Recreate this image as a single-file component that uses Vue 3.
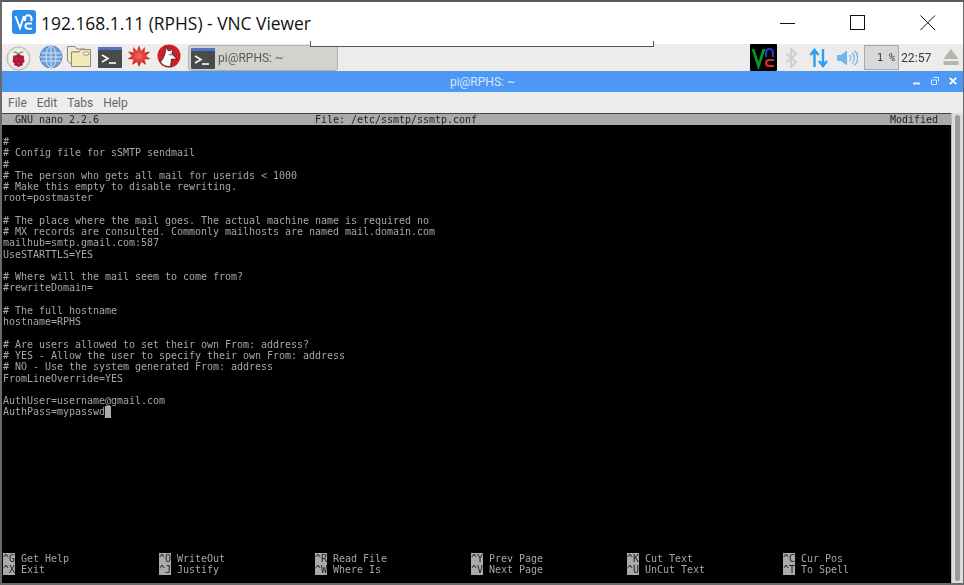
<script setup>
const lines = [
  '',
  '#',
  '# Config file for sSMTP sendmail',
  '#',
  '# The person who gets all mail for userids < 1000',
  '# Make this empty to disable rewriting.',
  'root=postmaster',
  '',
  '# The place where the mail goes. The actual machine name is required no',
  '# MX records are consulted. Commonly mailhosts are named mail.domain.com',
  'mailhub=smtp.gmail.com:587',
  'UseSTARTTLS=YES',
  '',
  '# Where will the mail seem to come from?',
  '#rewriteDomain=',
  '',
  '# The full hostname',
  'hostname=RPHS',
  '',
  '# Are users allowed to set their own From: address?',
  '# YES - Allow the user to specify their own From: address',
  '# NO - Use the system generated From: address',
  'FromLineOverride=YES',
  '',
  'AuthUser=username@gmail.com',
]
const help = [
  ['^G', 'Get Help'], ['^O', 'WriteOut'], ['^R', 'Read File'], ['^Y', 'Prev Page'], ['^K', 'Cut Text'], ['^C', 'Cur Pos'],
  ['^X', 'Exit'], ['^J', 'Justify'], ['^W', 'Where Is'], ['^V', 'Next Page'], ['^U', 'UnCut Text'], ['^T', 'To Spell'],
]
const menus = ['File', 'Edit', 'Tabs', 'Help']
</script>

<template>
  <div class="win">
    <header class="titlebar">
      <svg class="appicon" viewBox="0 0 24 24" width="24" height="24">
        <rect width="24" height="24" rx="3" fill="#2b8de8" />
        <path d="M3.5 6 L8 18 L12 6" fill="none" stroke="#fff" stroke-width="2" />
        <path d="M13 11 V8.5 a3 3 0 0 1 6.5 0 V11" fill="none" stroke="#fff" stroke-width="2" />
        <path d="M20 13.5 H16 a2.6 2.6 0 0 0 0 5.2 H20" fill="none" stroke="#fff" stroke-width="2" />
      </svg>
      <span class="title">192.168.1.11 (RPHS) - VNC Viewer</span>
      <div class="winbtns">
        <svg width="16" height="16" viewBox="0 0 16 16"><path d="M0 8.5H15" stroke="#111" /></svg>
        <svg width="16" height="16" viewBox="0 0 16 16"><rect x="0.5" y="0.5" width="14" height="14" fill="none" stroke="#111" /></svg>
        <svg width="16" height="16" viewBox="0 0 16 16"><path d="M0.5 0.5L15 15M15 0.5L0.5 15" stroke="#111" /></svg>
      </div>
    </header>

    <div class="panel">
      <div class="launchers">
        <svg width="25" height="25" viewBox="0 0 26 26" class="ic-rpi">
          <circle cx="13" cy="13" r="12" fill="#e6e4e0" stroke="#b5b3af" />
          <circle cx="13" cy="13" r="9.5" fill="#f3f2f0" />
          <path d="M13 9C10 6 8 6.5 8 6.5S10 5 13 8C16 5 18 6.5 18 6.5S16 6 13 9Z" fill="#5da83a" stroke="#5da83a" />
          <g fill="#b3153f">
            <circle cx="13" cy="11" r="2.6" /><circle cx="9.4" cy="12" r="2.3" /><circle cx="16.6" cy="12" r="2.3" />
            <circle cx="8.9" cy="15.5" r="2.2" /><circle cx="17.1" cy="15.5" r="2.2" /><circle cx="13" cy="15" r="2.6" />
            <circle cx="10.6" cy="18.6" r="2.2" /><circle cx="15.4" cy="18.6" r="2.2" /><circle cx="13" cy="20" r="1.8" />
          </g>
        </svg>
        <svg width="24" height="24" viewBox="0 0 24 24" class="ic-globe">
          <circle cx="12" cy="12" r="11" fill="#6f9fd8" stroke="#5a7fae" />
          <g fill="none" stroke="#d4e4f5" stroke-width="1">
            <ellipse cx="12" cy="12" rx="5" ry="11" /><path d="M12 1V23M1.5 8H22.5M1 12H23M1.5 16H22.5" />
          </g>
        </svg>
        <svg width="26" height="24" viewBox="0 0 26 24" class="ic-folder">
          <path d="M1.5 2.5H9L11 5H19V8H5.5V20L1.5 17Z" fill="#f2ecd0" stroke="#8c877a" />
          <path d="M5.5 8H13L15 5.5H24.5V22.5H5.5Z" fill="#f5e9b8" stroke="#8c877a" />
          <rect x="17" y="8" width="6" height="3" rx="1.5" fill="#fff" stroke="#8c877a" />
        </svg>
        <svg width="24" height="21" viewBox="0 0 24 21" class="ic-term">
          <rect width="24" height="21" rx="1" fill="#4a4a4a" />
          <rect width="24" height="3" fill="#4f76c8" />
          <path d="M4 8L10 11.5L4 15" fill="none" stroke="#fff" stroke-width="1.6" />
          <path d="M11 16H18" stroke="#fff" stroke-width="1.6" />
        </svg>
        <svg width="24" height="24" viewBox="0 0 24 24" class="ic-burst">
          <defs>
            <radialGradient id="burstfill"><stop offset="0" stop-color="#f76a5c" /><stop offset="1" stop-color="#c8130f" /></radialGradient>
          </defs>
          <polygon fill="url(#burstfill)" points="12,1 14,7 18,3 17.5,8.5 23,7.5 19,12 23.5,15 17.5,15.5 19,21 14.5,18 12,23 10,18 5,21 6.5,15.5 0.5,15 5,12 1,7.5 6.5,8.5 6,3 10,7" />
        </svg>
        <svg width="24" height="24" viewBox="0 0 24 24" class="ic-wolf">
          <circle cx="12" cy="12" r="11.5" fill="#d01f24" />
          <path d="M9 3L11.5 7L15.5 5.5L15 10L20 15.5L14.5 15L13.5 22.5C9 23 5.5 21 3.5 18C6 15 8.5 11 9 3Z" fill="#fff" stroke="#222" stroke-width="0.8" />
          <path d="M12.5 10.5L14.5 11" stroke="#222" stroke-width="1" />
        </svg>
      </div>
      <div class="taskbtn">
        <svg width="24" height="21" viewBox="0 0 24 21">
          <rect width="24" height="21" rx="1" fill="#4a4a4a" />
          <rect width="24" height="3" fill="#4f76c8" />
          <path d="M4 8L10 11.5L4 15" fill="none" stroke="#fff" stroke-width="1.6" />
          <path d="M11 16H18" stroke="#fff" stroke-width="1.6" />
        </svg>
        <span>pi@RPHS: ~</span>
      </div>
      <div class="tray">
        <svg class="tile" width="27" height="27" viewBox="0 0 27 27">
          <rect width="27" height="27" rx="1" fill="#000" />
          <path d="M3 5L8.5 22L14 5" fill="none" stroke="#0a9a1e" stroke-width="2.6" />
          <path d="M16 13V8.5a3.5 3.5 0 0 1 7 0V13" fill="none" stroke="#1b3fd0" stroke-width="2.2" />
          <path d="M24 16H19a3 3 0 0 0 0 6H24" fill="none" stroke="#e02a2a" stroke-width="2.2" />
        </svg>
        <svg class="bt" width="12" height="20" viewBox="0 0 12 20">
          <path d="M1 5.5L11 14L6 19V1L11 6L1 14.5" fill="none" stroke="#cfcfcf" stroke-width="2" />
        </svg>
        <svg class="net" width="20" height="20" viewBox="0 0 20 20">
          <path d="M5.5 19V3M1.5 7L5.5 2L9.5 7M14 1V17M10 13L14 18L18 13" fill="none" stroke="#2a9df4" stroke-width="2.4" />
        </svg>
        <svg class="vol" width="22" height="18" viewBox="0 0 22 18">
          <path d="M1 6H5L11 1.5V16.5L5 12H1Z" fill="#6cb8f2" />
          <path d="M13.5 6a4 4 0 0 1 0 6M16 3.5a7.5 7.5 0 0 1 0 11M18.5 1.5a10.5 10.5 0 0 1 0 15" fill="none" stroke="#6cb8f2" stroke-width="1.2" />
        </svg>
        <div class="cpu">1 %</div>
        <span class="clock">22:57</span>
        <svg class="eject" width="16" height="17" viewBox="0 0 16 17">
          <path d="M8 0L15.5 10H0.5Z" fill="#b4b4b1" />
          <rect x="0.5" y="12" width="15" height="4" fill="#b4b4b1" />
        </svg>
      </div>
    </div>

    <div class="wmbar">
      <span class="wmtitle">pi@RPHS: ~</span>
      <div class="wmbtns">
        <svg width="8" height="8" viewBox="0 0 8 8"><rect x="0" y="5.5" width="7" height="2" fill="#e8f1fc" /></svg>
        <svg width="8" height="8" viewBox="0 0 8 8"><path d="M2.5 0.5H7.5V4.5M0.5 3H5.5V7.5H0.5Z" fill="none" stroke="#d4e5fb" /></svg>
        <svg width="8" height="8" viewBox="0 0 8 8"><path d="M0.8 0.8L7.2 7.2M7.2 0.8L0.8 7.2" stroke="#fff" stroke-width="1.8" /></svg>
      </div>
    </div>

    <nav class="menubar">
      <span v-for="m in menus" :key="m">{{ m }}</span>
    </nav>

    <main class="termwrap">
      <section class="screen">
        <div class="status">
          <span class="st-a">GNU nano 2.2.6</span>
          <span class="st-b">File: /etc/ssmtp/ssmtp.conf</span>
          <span class="st-c">Modified</span>
        </div>
        <div class="body">
          <div v-for="(l, i) in lines" :key="i" class="row">{{ l }}</div>
          <div class="row">AuthPass=mypasswd<span class="cursor"> </span></div>
        </div>
        <div class="help">
          <div v-for="h in help" :key="h[0]" class="cell"><span class="rev">{{ h[0] }}</span> {{ h[1] }}</div>
        </div>
      </section>
      <aside class="scroll"><div class="thumb"></div></aside>
    </main>

    <div class="artifact"></div>
  </div>
</template>

<style scoped>
.win {
  position: relative;
  width: 964px;
  height: 585px;
  box-sizing: border-box;
  border-top: 2px solid #5c5c5c;
  border-left: 2px solid #6a6a6a;
  border-right: 1px solid #6a6a6a;
  border-bottom: 2px solid #6a6a6a;
  background: #fff;
  display: flex;
  flex-direction: column;
  overflow: hidden;
}
.titlebar {
  height: 42px;
  flex: none;
  display: flex;
  align-items: center;
  padding-left: 10px;
  background: #fff;
}
.appicon { margin-top: -2px; }
.title {
  margin-left: 5px;
  margin-top: -1px;
  font: 17.4px "Open Sans", sans-serif;
  color: #111;
  white-space: nowrap;
}
.winbtns {
  margin-left: auto;
  margin-right: 27px;
  margin-top: -1px;
  display: flex;
  gap: 54px;
}
.panel {
  height: 27px;
  flex: none;
  background: #edecea;
  display: flex;
  align-items: center;
  position: relative;
  filter: blur(0.25px);
}
.launchers {
  display: flex;
  align-items: center;
  padding-left: 4px;
  width: 186px;
  flex: none;
  box-sizing: border-box;
}
.ic-rpi { margin-top: 1px; margin-right: 7px; flex: none; margin-left: 0; }
.ic-globe { margin-right: 3px; margin-left: 1px; flex: none; margin-top: -2px; }
.ic-folder { margin-right: 6px; flex: none; margin-top: -3px; }
.ic-term { margin-right: 5px; flex: none; margin-top: 0; }
.ic-burst { margin-right: 6px; flex: none; margin-top: -3px; }
.ic-wolf { flex: none; margin-top: -3px; }
.taskbtn {
  width: 150px;
  height: 26px;
  margin-top: 1px;
  box-sizing: border-box;
  border: 1px solid #b3b1ac;
  border-radius: 3px;
  background: #d4d2ce;
  display: flex;
  align-items: center;
  padding-left: 2px;
  gap: 3px;
  font: 12px Roboto, sans-serif;
  color: #5a5a5a;
  white-space: nowrap;
}
.tray {
  margin-left: auto;
  display: flex;
  align-items: center;
  height: 27px;
  padding-right: 4px;
}
.tile { margin-right: 8px; }
.bt { margin-right: 12px; }
.net { margin-right: 7px; }
.vol { margin-right: 6px; }
.cpu {
  width: 35px;
  height: 25px;
  box-sizing: border-box;
  border: 1px solid #a8a8a6;
  background: #d8d8d8;
  font: 10px/23px "DejaVu Sans Mono", monospace;
  color: #333;
  text-align: right;
  padding-right: 3px;
}
.clock {
  margin-left: 2px;
  width: 41px;
  font: 12.2px Roboto, sans-serif;
  color: #3a3a3a;
}
.eject { margin-left: 1px; }
.wmbar {
  height: 21px;
  flex: none;
  background: #4d98f4;
  position: relative;
  display: flex;
  align-items: center;
  justify-content: center;
}
.wmtitle {
  font: 12px Roboto, sans-serif;
  color: #d8e7fb;
}
.wmbtns {
  position: absolute;
  right: 6px;
  top: 6px;
  display: flex;
  gap: 10px;
}
.menubar {
  height: 21px;
  flex: none;
  background: #ededed;
  display: flex;
  align-items: center;
  gap: 10px;
  padding-left: 6px;
  font: 12px Roboto, sans-serif;
  color: #666;
}
.termwrap {
  flex: 1;
  min-height: 0;
  display: flex;
  background: #000;
}
.screen {
  width: 949px;
  flex: none;
  background: #000;
  overflow: hidden;
  font: 10px/11.27px "DejaVu Sans Mono", monospace;
  letter-spacing: -0.02px;
  color: #a6a6a6;
  white-space: pre;
  padding-top: 0.5px;
  filter: blur(0.3px);
}
.status {
  height: 11.27px;
  background: #aaa;
  color: #222;
  display: flex;
  box-shadow: 0 -1px 0 #444;
}
.st-a { margin-left: 13px; width: 300px; }
.st-b { width: 575px; }
.st-c { margin-left: 0; }
.body {
  height: calc(38 * 11.27px);
  padding-left: 1px;
}
.row { height: 11.27px; }
.cursor { background: #aaa; display: inline-block; width: 6px; height: 11.27px; vertical-align: top; }
.help {
  display: grid;
  grid-template-columns: repeat(6, 156px);
  grid-auto-rows: 11.27px;
  padding-left: 1px;
}
.rev { background: #aaa; color: #222; }
.scroll {
  flex: 1;
  background: #dcdcdc;
  border-left: 1px solid #b8b8b8;
  padding: 2px 3px;
  display: flex;
}
.thumb {
  flex: 1;
  background: #9b9b9b;
  border-radius: 3px;
}
.artifact {
  position: absolute;
  left: 308px;
  top: 39px;
  width: 344px;
  height: 6px;
  box-sizing: border-box;
  background: #fff;
  border: 1px solid #555;
  border-top: none;
}
</style>

<style>
html, body { margin: 0; background: #fff; }
</style>
